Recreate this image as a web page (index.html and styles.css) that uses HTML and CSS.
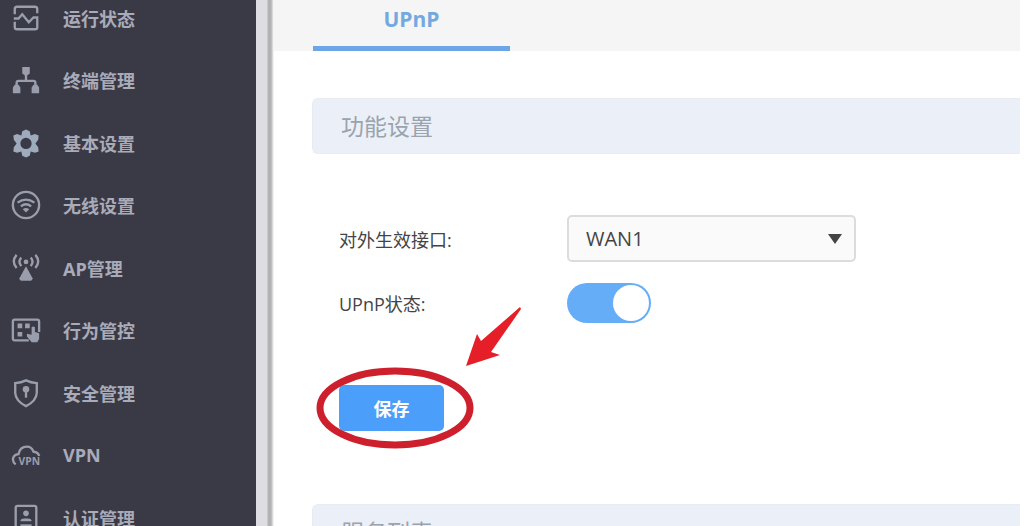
FILE: index.html
```html
<!DOCTYPE html>
<html lang="zh-CN">
  <head>
    <meta charset="utf-8" />
    <meta name="viewport" content="width=device-width, initial-scale=1" />
    <title>UPnP</title>
    <link rel="stylesheet" href="styles.css">
  </head>
  <body>
    <div class="app">
      <!--Sidebar-->
      <nav class="sidebar">
        <ul class="menu">
          <li>
            <a href="#status">
              <svg class="icon" viewBox="0 0 32 32">
                <path d="M4 12V6.500Q4 4 6.500 4H25.500Q28 4 28 6.500V11M4 20V25.500Q4 28 6.500 28H25.500Q28 28 28 26.500V15.500H24L19 20.500L12 12L8 16.500H3"></path>
              </svg>
              运行状态
            </a>
          </li>
          <li>
            <a href="#terminal">
              <svg class="icon" viewBox="0 0 32 32">
                <path d="M16 9V17M6 24V19Q6 17 8 17H24Q26 17 26 19V24"></path>
                <path class="solid" d="M12 2h8v7l-4 3l-4-3zM2 24l2-3h4l2 3v6H2zM22 24l2-3h4l2 3v6h-8z"></path>
              </svg>
              终端管理
            </a>
          </li>
          <li>
            <a href="#basic">
              <svg class="icon gear" viewBox="0 0 32 32">
                <path class="solid" fill-rule="evenodd" d="M16 1.500L20 3.500L21 8L25.500 6.500L29.500 8L29 12.500L26 16.500L29 20.500L29.500 25L25.500 26.500L21 25L20 29.500L16 31.500L12 29.500L11 25L6.500 26.500L2.500 25L3 20.500L6 16.500L3 12.500L2.500 8L6.500 6.500L11 8L12 3.500zM16 10.500a6 6 0 1 0 0 12a6 6 0 1 0 0-12z"></path>
              </svg>
              基本设置
            </a>
          </li>
          <li>
            <a href="#wireless">
              <svg class="icon" viewBox="0 0 32 32">
                <circle cx="16" cy="16" r="14"></circle>
                <path d="M7 13.500Q16 7 25 13.500M10.500 17.500Q16 13 21.500 17.500"></path>
                <path class="solid" d="M12.500 20.500Q16 18 19.500 20.500L16 24z"></path>
              </svg>
              无线设置
            </a>
          </li>
          <li>
            <a href="#ap">
              <svg class="icon" viewBox="0 0 32 32">
                <path d="M6 2Q0 9 6 16M26 2Q32 9 26 16M11 5Q7 9 11 14M21 5Q25 9 21 14"></path>
                <path class="solid" d="M16 14L23 27Q23 29.500 21 29.500H11Q9 29.500 9 27z"></path>
                <circle class="solid" cx="16" cy="9.500" r="2.500"></circle>
              </svg>
              AP管理
            </a>
          </li>
          <li>
            <a href="#behavior">
              <svg class="icon" viewBox="0 0 32 32">
                <path d="M19 27H4Q2 27 2 25V7Q2 5 4 5H28Q30 5 30 7V18"></path>
                <path class="solid" d="M7 9h5v5H7zM15 9h5v5h-5zM7 18h5v5H7zM22 13q2-1.500 3.500 0v5l4.500 1.500v6L28 29h-6l-5-6v-3l5 1z"></path>
              </svg>
              行为管控
            </a>
          </li>
          <li>
            <a href="#security">
              <svg class="icon" viewBox="0 0 32 32">
                <path d="M16 2.500Q21 5 27.500 5.500V16Q27 24.500 16 30Q5 24.500 4.500 16V5.500Q11 5 16 2.500z"></path>
                <path d="M16 12V21"></path>
                <circle class="solid" cx="16" cy="12" r="3.500"></circle>
              </svg>
              安全管理
            </a>
          </li>
          <li>
            <a href="#vpn">
              <svg class="icon" viewBox="0 0 32 32">
                <path d="M5 26Q1 23 2.500 18.500Q4 15 8 15Q9.500 7 17 7Q22 7 24 12.500Q29 13 30 17"></path>
                <text x="8" y="27">VPN</text>
              </svg>
              VPN
            </a>
          </li>
          <li>
            <a href="#auth">
              <svg class="icon" viewBox="0 0 32 32">
                <rect x="5" y="3" width="22" height="27" rx="2"></rect>
                <circle class="solid" cx="16" cy="11" r="3"></circle>
                <path class="solid" d="M10 19.500q0-3 4-3h4q4 0 4 3z"></path>
                <path d="M10 24H22"></path>
              </svg>
              认证管理
            </a>
          </li>
        </ul>
      </nav>
      <div class="divider"></div>

      <!--Content-->
      <main class="content">
        <div class="tabs">
          <a class="tab" href="#upnp">UPnP</a>
        </div>
        <h2 class="section-title">功能设置</h2>
        <form class="settings">
          <div class="row">
            <label for="wan">对外生效接口:</label>
            <div class="select-wrapper">
              <select id="wan">
                <option>WAN1</option>
                <option>WAN2</option>
              </select>
              <svg class="caret" viewBox="0 0 14 10"><path d="M0 0H14L7 10z"></path></svg>
            </div>
          </div>
          <div class="row">
            <label for="upnp-state">UPnP状态:</label>
            <input class="switch" id="upnp-state" type="checkbox" checked>
          </div>
          <div class="actions">
            <button class="save" type="button">保存</button>
            <svg class="mark" viewBox="0 0 210 146" aria-hidden="true">
              <ellipse cx="80" cy="103" rx="75" ry="37"></ellipse>
              <path d="M205 2L206 4L176 47L185 50L151 61L162 29L166 36z"></path>
            </svg>
          </div>
        </form>
        <h2 class="section-title">服务列表</h2>
      </main>
    </div>
  </body>
</html>
```
FILE: styles.css
```css
* {
  box-sizing: border-box;
}
body {
  margin: 0;
  font-family: "Open Sans", "Noto Sans CJK SC", sans-serif;
  font-size: 18px;
  color: #444;
  background-color: #fff;
}
.app {
  display: flex;
  height: 100vh;
  overflow: hidden;
}
.sidebar {
  flex: none;
  width: 256px;
  background-color: #3a3a46;
}
.menu {
  display: grid;
  grid-auto-rows: 63px 62px;
  margin: -14px 0 0;
  padding: 0;
  list-style: none;
}
.menu a {
  display: flex;
  align-items: center;
  gap: 22px;
  height: 100%;
  padding-left: 11px;
  color: #a9abb8;
  font-weight: 700;
  text-decoration: none;
}
.icon {
  flex: none;
  width: 30px;
  height: 30px;
  fill: none;
  stroke: #9a9dac;
  stroke-width: 2.5;
}
.icon .solid {
  fill: #9a9dac;
  stroke: none;
}
.icon.gear .solid {
  fill: #9dabbd;
}
.icon text {
  fill: #9a9dac;
  stroke: none;
  font-size: 11px;
  font-weight: 700;
}
.divider {
  flex: none;
  width: 18px;
  background: linear-gradient(to right, #dedee2 0 11px, #b2b2b4 12px 15px, #fff 18px);
}
.content {
  flex: 1;
  min-width: 0;
  margin-right: 4px;
}
.tabs {
  display: flex;
  height: 51px;
  padding-left: 39px;
  background-color: #f5f5f5;
}
.tab {
  width: 197px;
  height: 51px;
  border-bottom: 5px solid #6ca6e8;
  color: #74a9e0;
  font-size: 21px;
  font-weight: 700;
  line-height: 38px;
  text-align: center;
  text-decoration: none;
}
.section-title {
  height: 56px;
  margin: 47px 0 0 38px;
  padding-left: 28px;
  border: 1px solid #e8ecf2;
  border-right: 0;
  border-radius: 6px 0 0 6px;
  background-color: #ebf0f8;
  color: #9aa3ae;
  font-size: 23px;
  font-weight: 400;
  line-height: 54px;
}
.settings {
  padding: 61px 0 26px 65px;
}
.row {
  display: flex;
  align-items: center;
  height: 47px;
  margin-bottom: 17px;
}
.row label {
  width: 228px;
}
.select-wrapper {
  position: relative;
  width: 289px;
}
.select-wrapper select {
  width: 100%;
  height: 47px;
  padding: 0 17px;
  appearance: none;
  border: 2px solid #dcdcdc;
  border-radius: 5px;
  background-color: #fafafa;
  color: #444;
  font-family: inherit;
  font-size: 20px;
}
.caret {
  position: absolute;
  top: 19px;
  right: 14px;
  width: 14px;
  height: 10px;
  fill: #444;
  pointer-events: none;
}
.switch {
  width: 84px;
  height: 40px;
  margin: 0;
  padding: 2px;
  appearance: none;
  border-radius: 20px;
  background-color: #b5b5b5;
  cursor: pointer;
}
.switch::before {
  content: "";
  display: block;
  width: 36px;
  height: 36px;
  border-radius: 50%;
  background-color: #fff;
}
.switch:checked {
  background-color: #66adf8;
}
.switch:checked::before {
  margin-left: auto;
}
.actions {
  position: relative;
  margin-top: 59px;
}
.save {
  display: block;
  width: 105px;
  height: 46px;
  border: 0;
  border-radius: 5px;
  background-color: #4b9ffb;
  color: #fff;
  font-family: inherit;
  font-size: 18px;
  font-weight: 600;
  cursor: pointer;
}
/* red circle and arrow over the save button */
.mark {
  position: absolute;
  top: -80px;
  left: -24px;
  width: 210px;
  height: 146px;
  pointer-events: none;
}
.mark ellipse {
  fill: none;
  stroke: #cd202c;
  stroke-width: 7;
}
.mark path {
  fill: #e51e28;
}
```
